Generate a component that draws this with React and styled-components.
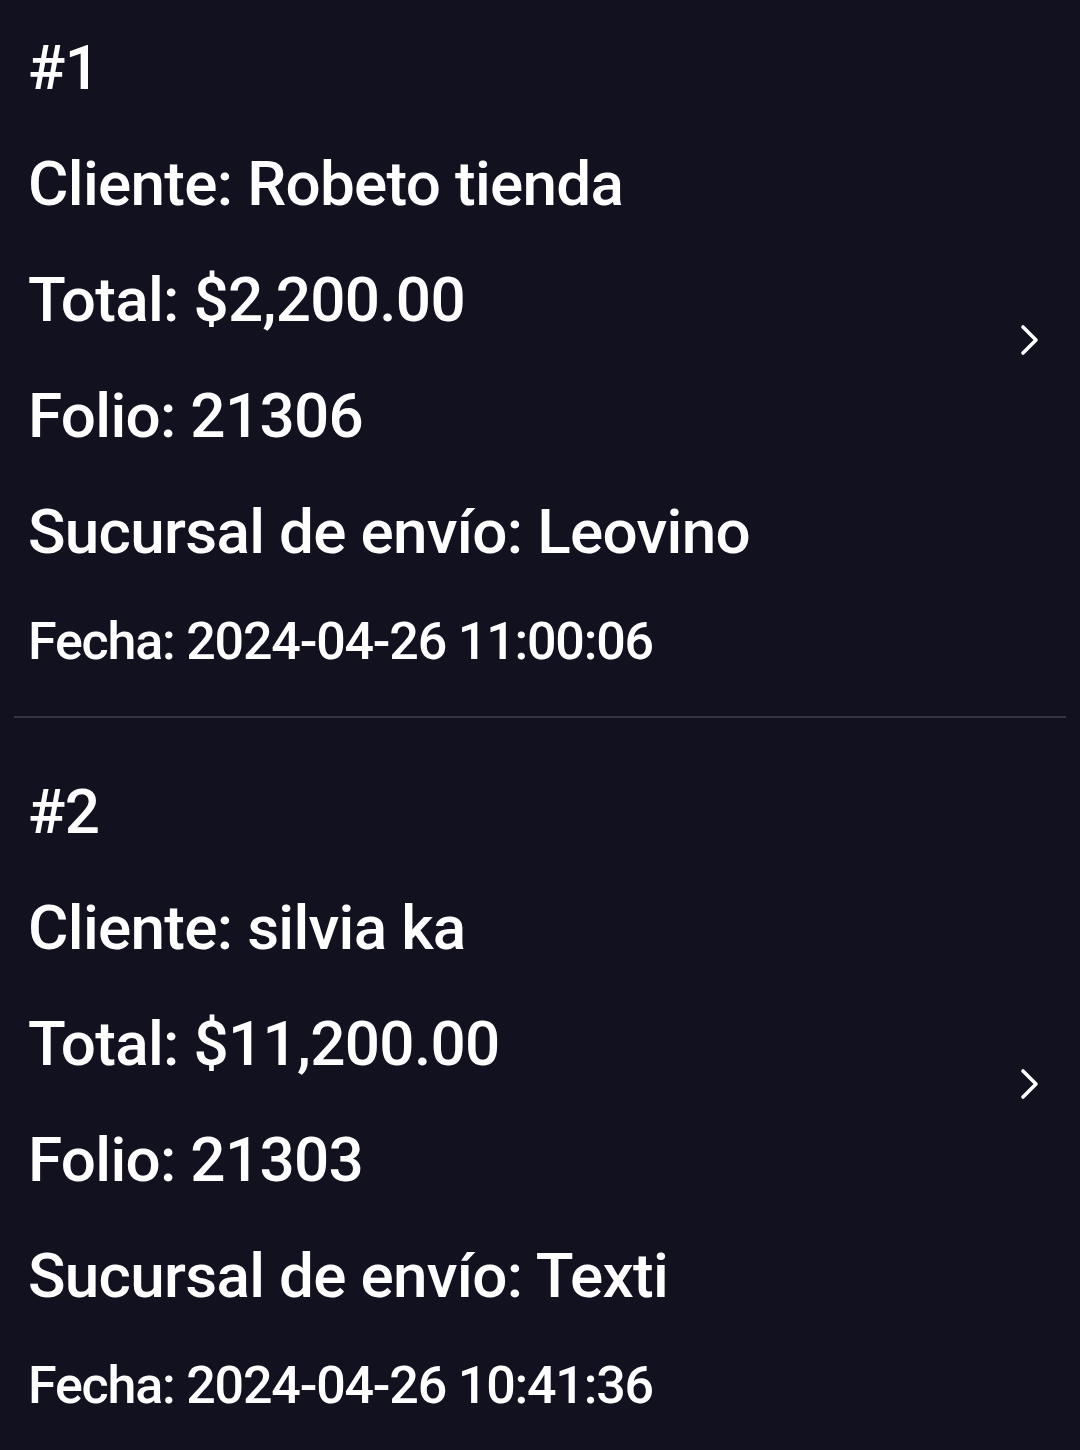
import React from "react";
import styled, { createGlobalStyle } from "styled-components";

const Global = createGlobalStyle`
  html, body { margin: 0; padding: 0; background: #12111f; }
  body { font-family: Roboto, "Noto Sans", "Liberation Sans", sans-serif; color: #ffffff; }
`;

const Page = styled.div`
  width: 1080px;
  min-height: 1450px;
  background: #12111f;
  overflow: hidden;
`;

const Item = styled.div`
  display: flex;
  align-items: center;
  padding: ${(p) => (p.$first ? "10px" : "36px")} 40px 22px 28px;
`;

const Content = styled.div`
  flex: 1;
  display: flex;
  flex-direction: column;
`;

const Line = styled.div`
  font-size: 62px;
  line-height: 116px;
  font-weight: 500;
  letter-spacing: -0.7px;
  white-space: nowrap;
`;

const DateLine = styled.div`
  font-size: 52px;
  line-height: 104px;
  font-weight: 500;
  letter-spacing: -1.2px;
  white-space: nowrap;
`;

const Chevron = styled.svg`
  width: 20px;
  height: 32px;
  flex: none;
  margin-bottom: 24px;
`;

const Divider = styled.div`
  height: 2px;
  margin: 0 14px;
  background: #34333f;
`;

const orders = [
  { n: 1, cliente: "Robeto tienda", total: "$2,200.00", folio: "21306", sucursal: "Leovino", fecha: "2024-04-26 11:00:06" },
  { n: 2, cliente: "silvia ka", total: "$11,200.00", folio: "21303", sucursal: "Texti", fecha: "2024-04-26 10:41:36" },
];

export default function App() {
  return (
    <Page>
      <Global />
      {orders.map((o, i) => (
        <React.Fragment key={o.n}>
          {i > 0 && <Divider />}
          <Item $first={i === 0}>
            <Content>
              <Line>#{o.n}</Line>
              <Line>Cliente: {o.cliente}</Line>
              <Line>Total: {o.total}</Line>
              <Line>Folio: {o.folio}</Line>
              <Line>Sucursal de envío: {o.sucursal}</Line>
              <DateLine>Fecha: {o.fecha}</DateLine>
            </Content>
            <Chevron viewBox="0 0 20 32">
              <polyline points="3,3 16,16 3,29" fill="none" stroke="#ffffff" strokeWidth="3.6" strokeLinecap="round" strokeLinejoin="round" />
            </Chevron>
          </Item>
        </React.Fragment>
      ))}
    </Page>
  );
}
